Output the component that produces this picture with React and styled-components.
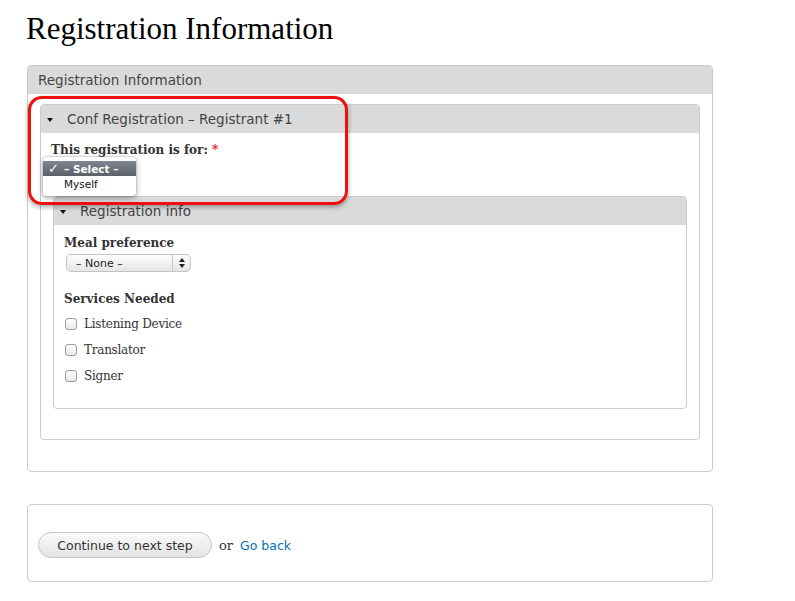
import React from 'react';
import styled, { createGlobalStyle } from 'styled-components';

const GlobalStyle = createGlobalStyle`
  body {
    margin: 0;
    background: #fff;
    color: #333;
    font-family: "DejaVu Serif", Georgia, serif;
  }
`;

const Page = styled.div`
  position: relative;
  padding: 0 0 20px 27px;
  width: 686px;
`;

const Title = styled.h1`
  margin: 0 0 0 -1px;
  padding: 12px 0 0 0;
  height: 65px;
  box-sizing: border-box;
  font-family: "Liberation Serif", "Times New Roman", serif;
  font-weight: normal;
  font-size: 31px;
  line-height: 1.107;
  color: #000;
`;

const Panel = styled.div`
  border: 1px solid #cccccc;
  border-radius: 4px;
  background: #fff;
  overflow: hidden;
`;

const PanelHeader = styled.div`
  display: flex;
  align-items: center;
  height: 28px;
  padding-left: ${(p) => p.$pl || 10}px;
  background: #dadada;
  font-family: "DejaVu Sans", Verdana, sans-serif;
  font-size: 13.5px;
  color: #444;
`;

const Caret = styled.span`
  width: 0;
  height: 0;
  border-left: 3px solid transparent;
  border-right: 3px solid transparent;
  border-top: 4px solid #111;
  margin-right: 14px;
  margin-top: 2px;
`;

const PanelBody = styled.div`
  padding: ${(p) => p.$pad};
`;

const FieldLabel = styled.div`
  font-family: "DejaVu Serif", Georgia, serif;
  font-weight: bold;
  font-size: 12px;
  color: #333;
  line-height: 15px;
`;

const Required = styled.span`
  color: #e0201e;
`;

const Select = styled.div`
  display: flex;
  align-items: center;
  justify-content: space-between;
  box-sizing: border-box;
  width: ${(p) => p.$w}px;
  height: 18px;
  margin: 3px 0 0 2px;
  border: 1px solid #c4c4c4;
  border-radius: 5px;
  background: linear-gradient(#fdfdfd, #e6e6e6);
  font-family: "DejaVu Sans", Verdana, sans-serif;
  font-size: 11px;
  color: #222;
  padding-left: 9px;
  visibility: ${(p) => (p.$hidden ? 'hidden' : 'visible')};
`;

const Arrows = styled.span`
  display: flex;
  align-items: center;
  justify-content: center;
  height: 100%;
  width: 17px;
  border-left: 1px solid #c8c8c8;
`;

const Group = styled.div`
  margin-top: ${(p) => p.$mt || 0}px;
  margin-left: ${(p) => p.$ml || 0}px;
`;

const CheckRow = styled.label`
  display: flex;
  align-items: center;
  gap: 7px;
  height: 26px;
  font-family: "DejaVu Serif", Georgia, serif;
  font-size: 12px;
  letter-spacing: -0.25px;
  color: #333;
`;

const Box = styled.span`
  box-sizing: border-box;
  width: 12px;
  height: 12px;
  margin-left: 1px;
  border: 1px solid #9c9c9c;
  border-radius: 3px;
  background: linear-gradient(#ffffff, #e9e9e9);
`;

const Popup = styled.div`
  position: absolute;
  left: 43px;
  top: 157px;
  width: 93px;
  padding: 4px 0 5px;
  background: #fff;
  border-radius: 4px;
  box-shadow: 0 2px 6px rgba(0, 0, 0, 0.35), 0 0 0 1px rgba(0, 0, 0, 0.08);
  font-family: "DejaVu Sans", Verdana, sans-serif;
  font-size: 10.5px;
  z-index: 3;
`;

const PopupItem = styled.div`
  display: flex;
  align-items: center;
  height: 15px;
  padding-left: ${(p) => (p.$selected ? 5 : 21)}px;
  color: ${(p) => (p.$selected ? '#fff' : '#111')};
  font-weight: ${(p) => (p.$selected ? 'bold' : 'normal')};
  background: ${(p) => (p.$selected ? 'linear-gradient(#80868f, #5b6169)' : 'transparent')};
`;

const Check = styled.span`
  display: inline-block;
  width: 16px;
  font-size: 13px;
  line-height: 15px;
`;

const Highlight = styled.div`
  position: absolute;
  left: 28px;
  top: 96px;
  width: 320px;
  height: 109px;
  box-sizing: border-box;
  border: 3px solid #ee0f0f;
  border-radius: 14px;
  box-shadow: 0 2px 5px rgba(0, 0, 0, 0.35);
  z-index: 2;
`;

const ActionPanel = styled(Panel)`
  margin-top: 32px;
  height: 78px;
  box-sizing: border-box;
  display: flex;
  align-items: center;
  padding: 4px 0 0 10px;
  gap: 7px;
  font-size: 13px;
`;

const Button = styled.button`
  box-sizing: border-box;
  width: 174px;
  height: 26px;
  border: 1px solid #c6c6c6;
  border-radius: 13px;
  background: linear-gradient(#fafafa, #e3e3e3);
  font-family: "DejaVu Sans", Verdana, sans-serif;
  font-size: 12.5px;
  color: #333;
  padding: 0;
`;

const Or = styled.span`
  color: #333;
`;

const Link = styled.a`
  font-family: "DejaVu Sans", Verdana, sans-serif;
  font-size: 12.5px;
  color: #0071b3;
  text-decoration: none;
`;

function UpDown() {
  return (
    <svg width="6" height="10" viewBox="0 0 6 10">
      <path d="M3 0 L6 4 L0 4 Z M0 6 L6 6 L3 10 Z" fill="#222" />
    </svg>
  );
}

export default function App() {
  return (
    <>
      <GlobalStyle />
      <Page>
        <Title>Registration Information</Title>
        <Panel>
          <PanelHeader $pl={10}>Registration Information</PanelHeader>
          <PanelBody $pad="10px 12px 31px 12px">
            <Panel>
              <PanelHeader $pl={6}>
                <Caret />
                Conf Registration – Registrant #1
              </PanelHeader>
              <PanelBody $pad="10px 12px 30px 10px">
                <FieldLabel>
                  This registration is for: <Required>*</Required>
                </FieldLabel>
                <Select $w={93} $hidden>
                  – Select –
                  <Arrows>
                    <UpDown />
                  </Arrows>
                </Select>
                <Group $mt={17} $ml={2}>
                  <Panel>
                    <PanelHeader $pl={6}>
                      <Caret />
                      Registration info
                    </PanelHeader>
                    <PanelBody $pad="11px 12px 19px 10px">
                      <FieldLabel>Meal preference</FieldLabel>
                      <Select $w={125}>
                        – None –
                        <Arrows>
                          <UpDown />
                        </Arrows>
                      </Select>
                      <Group $mt={20}>
                        <FieldLabel>Services Needed</FieldLabel>
                        <Group $mt={4}>
                          {['Listening Device', 'Translator', 'Signer'].map((s) => (
                            <CheckRow key={s}>
                              <Box />
                              {s}
                            </CheckRow>
                          ))}
                        </Group>
                      </Group>
                    </PanelBody>
                  </Panel>
                </Group>
              </PanelBody>
            </Panel>
          </PanelBody>
        </Panel>
        <ActionPanel>
          <Button>Continue to next step</Button>
          <Or>or</Or>
          <Link href="#">Go back</Link>
        </ActionPanel>
        <Highlight />
        <Popup>
          <PopupItem $selected>
            <Check>✓</Check>– Select –
          </PopupItem>
          <PopupItem>Myself</PopupItem>
        </Popup>
      </Page>
    </>
  );
}
